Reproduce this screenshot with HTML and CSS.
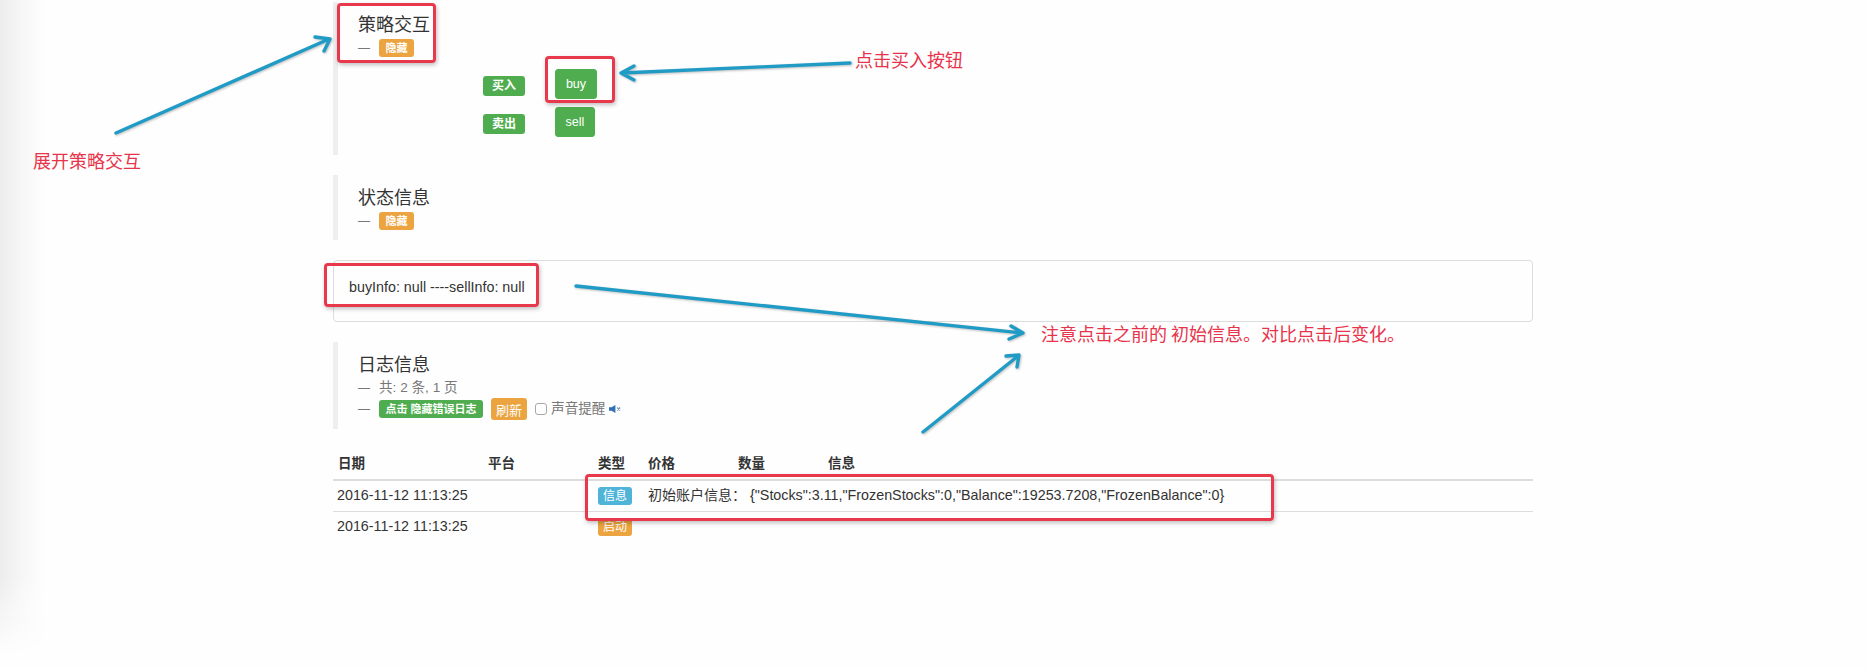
FILE: index.html
```html
<!DOCTYPE html>
<html lang="zh">
<head>
<meta charset="utf-8">
<title>策略交互</title>
<link rel="stylesheet" href="styles.css">
</head>
<body>
<div class="edge-shade"></div>
<main class="page">
  <section class="quote">
    <h4>策略交互</h4>
    <div class="sub"><span class="dash">—</span><span class="label orange">隐藏</span></div>
    <div class="commands">
      <span class="label green big">买入</span><button class="btn buy">buy</button>
      <span class="label green big">卖出</span><button class="btn sell">sell</button>
    </div>
  </section>
  <section class="quote">
    <h4>状态信息</h4>
    <div class="sub"><span class="dash">—</span><span class="label orange">隐藏</span></div>
  </section>
  <div class="panel">buyInfo: null ----sellInfo: null</div>
  <section class="quote">
    <h4>日志信息</h4>
    <div class="sub"><span class="dash">—</span>共: 2 条, 1 页</div>
    <div class="sub controls"><span class="dash">—</span><span class="label green">点击 隐藏错误日志</span><button class="refresh">刷新</button><input class="check" type="checkbox"><span>声音提醒</span><svg class="mute" viewBox="0 0 12 8" width="12" height="8"><path d="M0 2.2h2.6L6.4 0v8L2.6 5.8H0z" fill="#2f6fb5"/><path d="M8.2 2.5l3 3M11.2 2.5l-3 3" stroke="#6f93bd" stroke-width="1.1" fill="none"/></svg></div>
  </section>
  <table class="logs">
    <colgroup><col class="c1"><col class="c2"><col class="c3"><col class="c4"><col class="c5"><col></colgroup>
    <thead><tr><th>日期</th><th>平台</th><th>类型</th><th>价格</th><th>数量</th><th>信息</th></tr></thead>
    <tbody>
      <tr><td>2016-11-12 11:13:25</td><td></td><td><span class="label blue tag">信息</span></td><td colspan="3"><span class="init">初始账户信息：</span><span class="json">{"Stocks":3.11,"FrozenStocks":0,"Balance":19253.7208,"FrozenBalance":0}</span></td></tr>
      <tr><td>2016-11-12 11:13:25</td><td></td><td><span class="label orange tag">启动</span></td><td colspan="3"></td></tr>
    </tbody>
  </table>
</main>
<div class="box b1"></div>
<div class="box b2"></div>
<div class="box b3"></div>
<div class="box b4"></div>
<svg class="arrows" viewBox="0 0 1867 669" width="1867" height="669">
  <path d="M116 133L329 39M315 37L330 39L324 51"/>
  <path d="M850 63L622 73M634 66L621 73L634 80"/>
  <path d="M576 286L1022 333M1011 326L1023 333L1009 339"/>
  <path d="M923 432L1018 356M1006 356L1019 355L1017 367"/>
</svg>
<div class="note n1">展开策略交互</div>
<div class="note n2">点击买入按钮</div>
<div class="note n3">注意点击之前的 初始信息。对比点击后变化。</div>
</body>
</html>
```
FILE: styles.css
```css
* { box-sizing: border-box; }
html, body { margin: 0; height: 669px; overflow: hidden; }
body {
  position: relative;
  background: #fefefe;
  color: #333;
  font: 14.3px/20px "Liberation Sans", "Noto Sans CJK SC", sans-serif;
}
.edge-shade {
  position: absolute;
  left: 0; top: 0;
  width: 46px; height: 655px;
  background: linear-gradient(to right, #ececec, #f6f6f6 45%, #fefefe);
  -webkit-mask-image: linear-gradient(to bottom, #000 88%, transparent);
  mask-image: linear-gradient(to bottom, #000 88%, transparent);
}
.page {
  position: relative;
  width: 1200px;
  margin-left: 333px;
  padding-top: 2px;
}
.quote {
  border-left: 5px solid #eee;
  padding: 11px 20px 9px;
  margin-bottom: 20px;
}
h4 {
  margin: 0;
  font-size: 18px;
  font-weight: 400;
  line-height: 24px;
  color: #333;
}
.sub { display: flex; align-items: center; height: 21px; color: #777; font-size: 13.6px; }
.dash { width: 21px; flex: none; font-size: 12px; }
.label {
  display: inline-block;
  color: #fff;
  font-size: 11px;
  font-weight: 700;
  line-height: 18px;
  height: 18px;
  padding: 0 6.5px;
  border-radius: 3px;
  text-align: center;
}
.orange { background: #eba43f; }
.green { background: #4fad4f; }
.blue { background: #4fb4d8; }
.commands {
  display: grid;
  grid-template-columns: 72px auto;
  justify-content: start;
  justify-items: start;
  align-items: center;
  row-gap: 8px;
  margin: 11px 0 9px 125px;
}
.big { width: 42px; height: 20px; line-height: 20px; font-size: 12px; padding: 0; margin-top: 4px; }
.btn {
  height: 30px;
  padding: 0;
  border: 1px solid #4cae4c;
  border-radius: 3px;
  background: #4fad4f;
  color: #fff;
  font: 12.5px "Liberation Sans", sans-serif;
}
.buy { width: 42px; }
.sell { width: 40px; }
.panel {
  height: 62px;
  padding: 16px 15px;
  margin-bottom: 20px;
  border: 1px solid #ddd;
  border-radius: 4px;
}
.controls { height: 22px; }
.refresh {
  width: 36px; height: 22px;
  margin-left: 8px;
  padding: 0;
  border: 0;
  border-radius: 3px;
  background: #eba43f;
  color: #fff;
  font: 13px "Noto Sans CJK SC", sans-serif;
}
.check {
  appearance: none;
  -webkit-appearance: none;
  width: 12px; height: 12px;
  margin: 0 4px 0 8px;
  background: #fff;
  border: 1px solid #a8a8a8;
  border-radius: 3px;
}
.mute { margin-left: 4px; }
.logs {
  width: 100%;
  border-collapse: collapse;
  table-layout: fixed;
}
.c1 { width: 150px; }
.c2 { width: 110px; }
.c3 { width: 50px; }
.c4 { width: 90px; }
.c5 { width: 90px; }
th {
  padding: 5px;
  font-size: 13.5px;
  font-weight: 700;
  text-align: left;
  border-bottom: 2px solid #ddd;
}
td {
  padding: 4px 5px 6px 4px;
  vertical-align: top;
  white-space: nowrap;
  border-top: 1px solid #ddd;
}
tbody tr:first-child td { border-top: 0; }
td:nth-child(n+3) { padding-left: 5px; }
.tag { font-weight: 400; font-size: 12px; width: 34px; padding: 0; margin-top: 2px; vertical-align: top; }
.init { font-size: 14px; }
.json { margin-left: 4px; }
.box {
  position: absolute;
  border: 3px solid #e8384c;
  border-radius: 4px;
  box-shadow: 1px 2px 4px rgba(0, 0, 0, .25);
}
.b1 { left: 337px; top: 3px; width: 99px; height: 60px; }
.b2 { left: 545px; top: 56px; width: 70px; height: 47px; }
.b3 { left: 324px; top: 263px; width: 215px; height: 44px; }
.b4 { left: 585px; top: 474px; width: 689px; height: 47px; }
.arrows {
  position: absolute;
  left: 0; top: 0;
  pointer-events: none;
  filter: drop-shadow(1px 1px 1px rgba(0, 0, 0, .25));
}
.arrows path { fill: none; stroke: #1f9bc6; stroke-width: 3.4; stroke-linecap: round; stroke-linejoin: round; }
.note {
  position: absolute;
  color: #e8344a;
  font: 18px/20px "Noto Sans CJK SC", sans-serif;
  white-space: nowrap;
}
.n1 { left: 33px; top: 150px; }
.n2 { left: 855px; top: 49px; }
.n3 { left: 1041px; top: 323px; }
```
